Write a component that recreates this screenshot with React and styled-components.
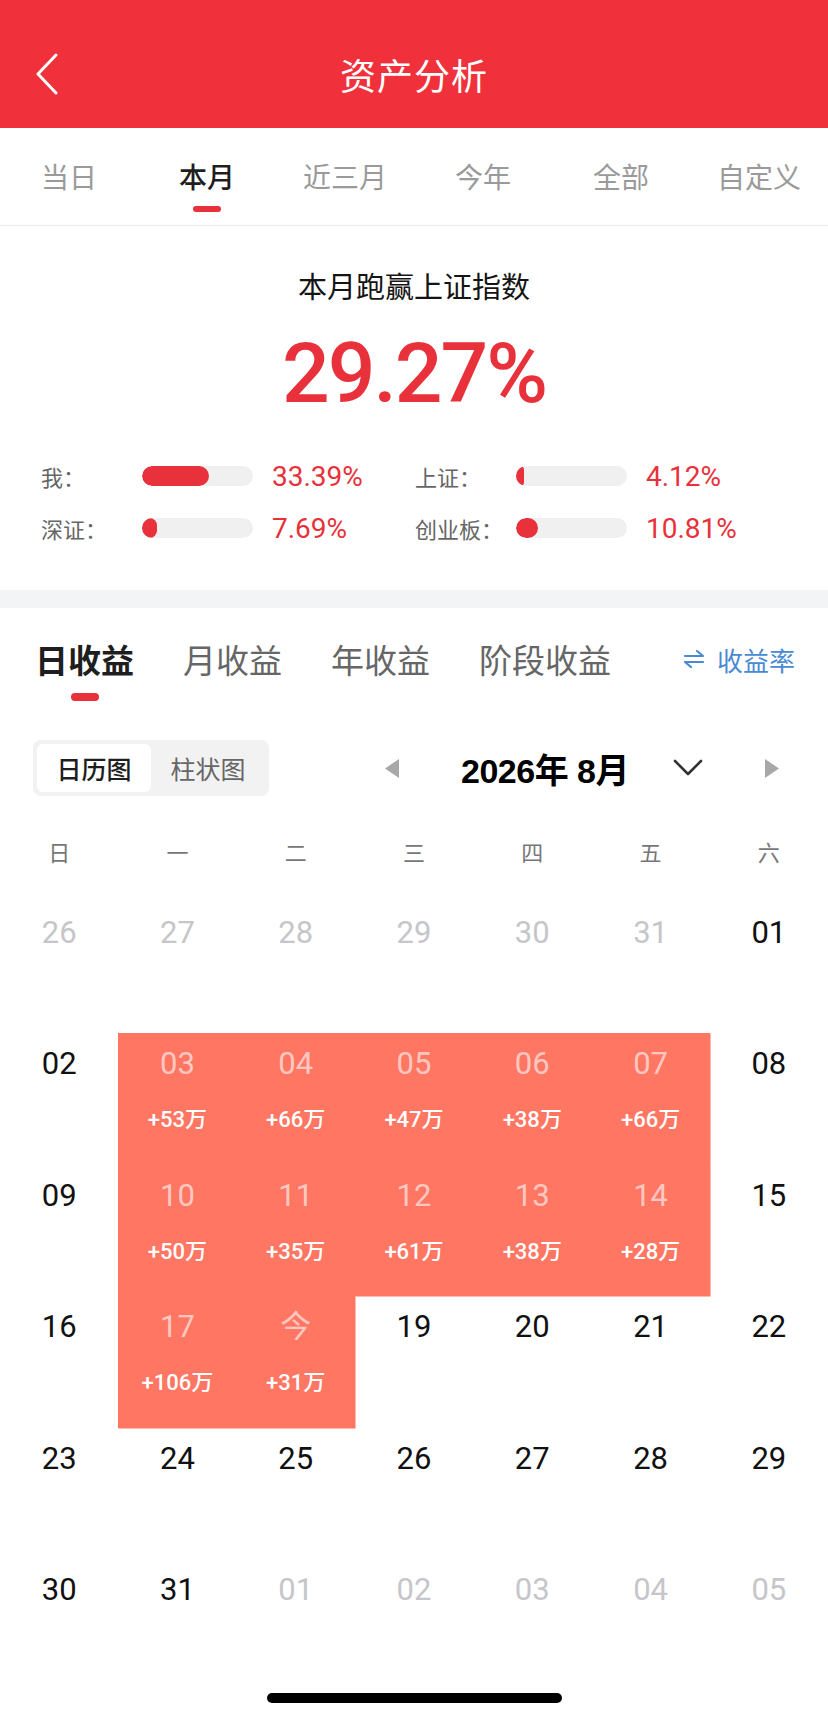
import React from "react";
import styled, { createGlobalStyle } from "styled-components";

const GlobalStyle = createGlobalStyle`
  html, body { margin: 0; padding: 0; background: #fff; }
  body { font-family: "Noto Sans CJK SC", "Noto Sans", sans-serif; -webkit-font-smoothing: antialiased; }
  * { box-sizing: border-box; }
`;

const RED = "#e8313a";
const CORAL = "#ff7663";

const Page = styled.div`
  width: 828px;
  background: #fff;
`;

const Header = styled.header`
  height: 128px;
  padding-top: 20px;
  background: #f0313c;
  display: grid;
  grid-template-columns: 110px 1fr 110px;
  align-items: center;
`;

const BackButton = styled.button`
  border: 0;
  background: transparent;
  padding: 0 0 0 34px;
  height: 48px;
  display: flex;
  align-items: center;
  cursor: pointer;
`;

const Title = styled.h1`
  margin: 0;
  text-align: center;
  color: #fff;
  font-size: 36px;
  font-weight: 400;
  line-height: 48px;
  letter-spacing: 1px;
`;

const PeriodTabs = styled.nav`
  height: 98px;
  display: grid;
  grid-template-columns: repeat(6, 1fr);
  border-bottom: 1px solid #ececec;
`;

const PeriodTab = styled.div`
  display: flex;
  flex-direction: column;
  align-items: center;
  padding-top: 30px;
  font-size: 28px;
  line-height: 36px;
  color: ${(p) => (p.$active ? "#1e1e1e" : "#9a9a9a")};
  font-weight: ${(p) => (p.$active ? 500 : 400)};
`;

const TabMark = styled.span`
  margin-top: 12px;
  width: 28px;
  height: 6px;
  border-radius: 3px;
  background: ${(p) => (p.$show ? RED : "transparent")};
`;

const Summary = styled.section`
  height: 364px;
  padding-top: 39px;
  display: flex;
  flex-direction: column;
  align-items: center;
`;

const SummaryTitle = styled.div`
  font-size: 29px;
  line-height: 40px;
  color: #141414;
`;

const BigNumber = styled.div`
  margin-top: 27px;
  font-family: Roboto, "Liberation Sans", sans-serif;
  font-weight: 500;
  font-size: 84px;
  line-height: 84px;
  letter-spacing: -2px;
  color: ${RED};
`;

const CompareGrid = styled.div`
  margin-top: 42px;
  align-self: stretch;
  padding-left: 41px;
  display: grid;
  grid-template-columns: 374px 374px;
  row-gap: 16px;
`;

const CompareItem = styled.div`
  display: flex;
  align-items: center;
  height: 36px;
`;

const CompareLabel = styled.span`
  width: 101px;
  font-size: 22px;
  color: #666;
`;

const Track = styled.div`
  width: 111px;
  height: 20px;
  border-radius: 10px;
  background: #f0f0f0;
  overflow: hidden;
`;

const Fill = styled.div`
  height: 100%;
  border-radius: 10px;
  background: ${RED};
`;

const CompareValue = styled.span`
  margin-left: 19px;
  font-family: Roboto, "Liberation Sans", sans-serif;
  font-size: 28px;
  color: ${RED};
`;

const Band = styled.div`
  height: 18px;
  background: #f3f4f6;
`;

const ProfitTabs = styled.div`
  display: flex;
  align-items: flex-start;
  gap: 49px;
  padding: 31px 33px 0 35px;
`;

const ProfitTab = styled.div`
  display: flex;
  flex-direction: column;
  align-items: center;
  font-size: 33px;
  line-height: 40px;
  color: ${(p) => (p.$active ? "#1e1e1e" : "#666")};
  font-weight: ${(p) => (p.$active ? 700 : 400)};
`;

const ProfitMark = styled.span`
  margin-top: 14px;
  width: 28px;
  height: 8px;
  border-radius: 4px;
  background: ${(p) => (p.$show ? RED : "transparent")};
`;

const RateToggle = styled.div`
  margin-left: auto;
  display: flex;
  align-items: center;
  gap: 12px;
  height: 40px;
  font-size: 26px;
  color: #4a8ad4;
`;

const Toolbar = styled.div`
  margin-top: 39px;
  height: 56px;
  display: flex;
  align-items: center;
  padding: 0 49px 0 33px;
`;

const Segmented = styled.div`
  display: flex;
  padding: 4px;
  background: #f2f2f2;
  border-radius: 8px;
`;

const Segment = styled.div`
  width: 114px;
  height: 48px;
  display: flex;
  align-items: center;
  justify-content: center;
  border-radius: 6px;
  font-size: 25px;
  background: ${(p) => (p.$active ? "#fff" : "transparent")};
  color: ${(p) => (p.$active ? "#1e1e1e" : "#666")};
  font-weight: ${(p) => (p.$active ? 500 : 400)};
`;

const MonthNav = styled.div`
  margin-left: auto;
  display: flex;
  align-items: center;
`;

const NavArrow = styled.span`
  display: flex;
  width: 14px;
  height: 19px;
`;

const MonthLabel = styled.span`
  margin: 0 44px 0 62px;
  font-family: "Liberation Sans", Arial, "Noto Sans CJK SC", sans-serif;
  font-weight: 700;
  font-size: 34px;
  color: #000;
  letter-spacing: -0.5px;
`;

const DropButton = styled.span`
  display: flex;
  margin-right: 62px;
`;

const WeekHeader = styled.div`
  margin: 40px 0 35.5px;
  display: grid;
  grid-template-columns: repeat(7, 1fr);
  line-height: 30px;
  font-size: 22px;
  color: #777;
  text-align: center;
`;

const CalendarGrid = styled.div`
  display: grid;
  grid-template-columns: repeat(7, 1fr);
  grid-auto-rows: 131.5px;
`;

const DayCell = styled.div`
  display: flex;
  flex-direction: column;
  align-items: center;
  padding-top: 13px;
  background: ${(p) => (p.$hl ? CORAL : "transparent")};
  box-shadow: ${(p) => (p.$hl ? `0.5px 0.5px 0 ${CORAL}` : "none")};
`;

const DayNum = styled.span`
  font-family: Roboto, "Liberation Sans", "Noto Sans CJK SC", sans-serif;
  font-size: 31px;
  line-height: 36px;
  color: ${(p) =>
    p.$hl ? "rgba(255,255,255,0.62)" : p.$dim ? "#c6c6ca" : "#111"};
`;

const DayProfit = styled.span`
  margin-top: 24px;
  font-family: Roboto, "Liberation Sans", "Noto Sans CJK SC", sans-serif;
  font-weight: 500;
  font-size: 22px;
  line-height: 28px;
  color: #fff;
`;

const HomeBar = styled.div`
  height: 23px;
  display: flex;
  justify-content: center;
  padding-top: 2px;
`;

const HomePill = styled.span`
  width: 295px;
  height: 10px;
  border-radius: 5px;
  background: #000;
`;

const periodTabs = ["当日", "本月", "近三月", "今年", "全部", "自定义"];
const compares = [
  { label: "我：", value: 33.39 },
  { label: "上证：", value: 4.12 },
  { label: "深证：", value: 7.69 },
  { label: "创业板：", value: 10.81 },
];
const weekDays = ["日", "一", "二", "三", "四", "五", "六"];

const profits = {
  "03": "+53万", "04": "+66万", "05": "+47万", "06": "+38万", "07": "+66万",
  "10": "+50万", "11": "+35万", "12": "+61万", "13": "+38万", "14": "+28万",
  "17": "+106万", "今": "+31万",
};

const pad = (n) => String(n).padStart(2, "0");
const days = [];
[26, 27, 28, 29, 30, 31].forEach((d) => days.push({ label: String(d), dim: true }));
for (let d = 1; d <= 31; d++) {
  const label = d === 18 ? "今" : pad(d);
  days.push({ label, profit: profits[label] });
}
[1, 2, 3, 4, 5].forEach((d) => days.push({ label: pad(d), dim: true }));

const BackIcon = () => (
  <svg width="26" height="42" viewBox="0 0 26 42" fill="none">
    <path d="M22 2 L4 21 L22 40" stroke="#fff" strokeWidth="3" strokeLinecap="round" strokeLinejoin="round" />
  </svg>
);

const SwapIcon = () => (
  <svg width="22" height="20" viewBox="0 0 22 20" fill="none">
    <path d="M2 7 H20 L14 2" stroke="#4a8ad4" strokeWidth="2.2" strokeLinecap="round" strokeLinejoin="round" />
    <path d="M20 13 H2 L8 18" stroke="#4a8ad4" strokeWidth="2.2" strokeLinecap="round" strokeLinejoin="round" />
  </svg>
);

const TriLeft = () => (
  <svg width="14" height="19" viewBox="0 0 14 19">
    <path d="M14 0 V19 L0 9.5 Z" fill="#a8a8a8" />
  </svg>
);

const TriRight = () => (
  <svg width="14" height="19" viewBox="0 0 14 19">
    <path d="M0 0 V19 L14 9.5 Z" fill="#a8a8a8" />
  </svg>
);

const ChevronDown = () => (
  <svg width="30" height="18" viewBox="0 0 30 18" fill="none">
    <path d="M2 2 L15 15 L28 2" stroke="#333" strokeWidth="2.6" strokeLinecap="round" strokeLinejoin="round" />
  </svg>
);

export default function App() {
  return (
    <Page>
      <GlobalStyle />
      <Header>
        <BackButton aria-label="返回">
          <BackIcon />
        </BackButton>
        <Title>资产分析</Title>
        <span />
      </Header>

      <PeriodTabs>
        {periodTabs.map((t) => (
          <PeriodTab key={t} $active={t === "本月"}>
            {t}
            <TabMark $show={t === "本月"} />
          </PeriodTab>
        ))}
      </PeriodTabs>

      <Summary>
        <SummaryTitle>本月跑赢上证指数</SummaryTitle>
        <BigNumber>29.27%</BigNumber>
        <CompareGrid>
          {compares.map((c) => (
            <CompareItem key={c.label}>
              <CompareLabel>{c.label}</CompareLabel>
              <Track>
                <Fill style={{ width: `${c.value * 2}px` }} />
              </Track>
              <CompareValue>{c.value.toFixed(2)}%</CompareValue>
            </CompareItem>
          ))}
        </CompareGrid>
      </Summary>

      <Band />

      <ProfitTabs>
        {["日收益", "月收益", "年收益", "阶段收益"].map((t, i) => (
          <ProfitTab key={t} $active={i === 0}>
            {t}
            <ProfitMark $show={i === 0} />
          </ProfitTab>
        ))}
        <RateToggle>
          <SwapIcon />
          收益率
        </RateToggle>
      </ProfitTabs>

      <Toolbar>
        <Segmented>
          <Segment $active>日历图</Segment>
          <Segment>柱状图</Segment>
        </Segmented>
        <MonthNav>
          <NavArrow>
            <TriLeft />
          </NavArrow>
          <MonthLabel>2026年 8月</MonthLabel>
          <DropButton>
            <ChevronDown />
          </DropButton>
          <NavArrow>
            <TriRight />
          </NavArrow>
        </MonthNav>
      </Toolbar>

      <WeekHeader>
        {weekDays.map((w) => (
          <span key={w}>{w}</span>
        ))}
      </WeekHeader>

      <CalendarGrid>
        {days.map((d, i) => (
          <DayCell key={i} $hl={!!d.profit}>
            <DayNum $dim={d.dim} $hl={!!d.profit}>
              {d.label}
            </DayNum>
            {d.profit && <DayProfit>{d.profit}</DayProfit>}
          </DayCell>
        ))}
      </CalendarGrid>

      <HomeBar>
        <HomePill />
      </HomeBar>
    </Page>
  );
}
